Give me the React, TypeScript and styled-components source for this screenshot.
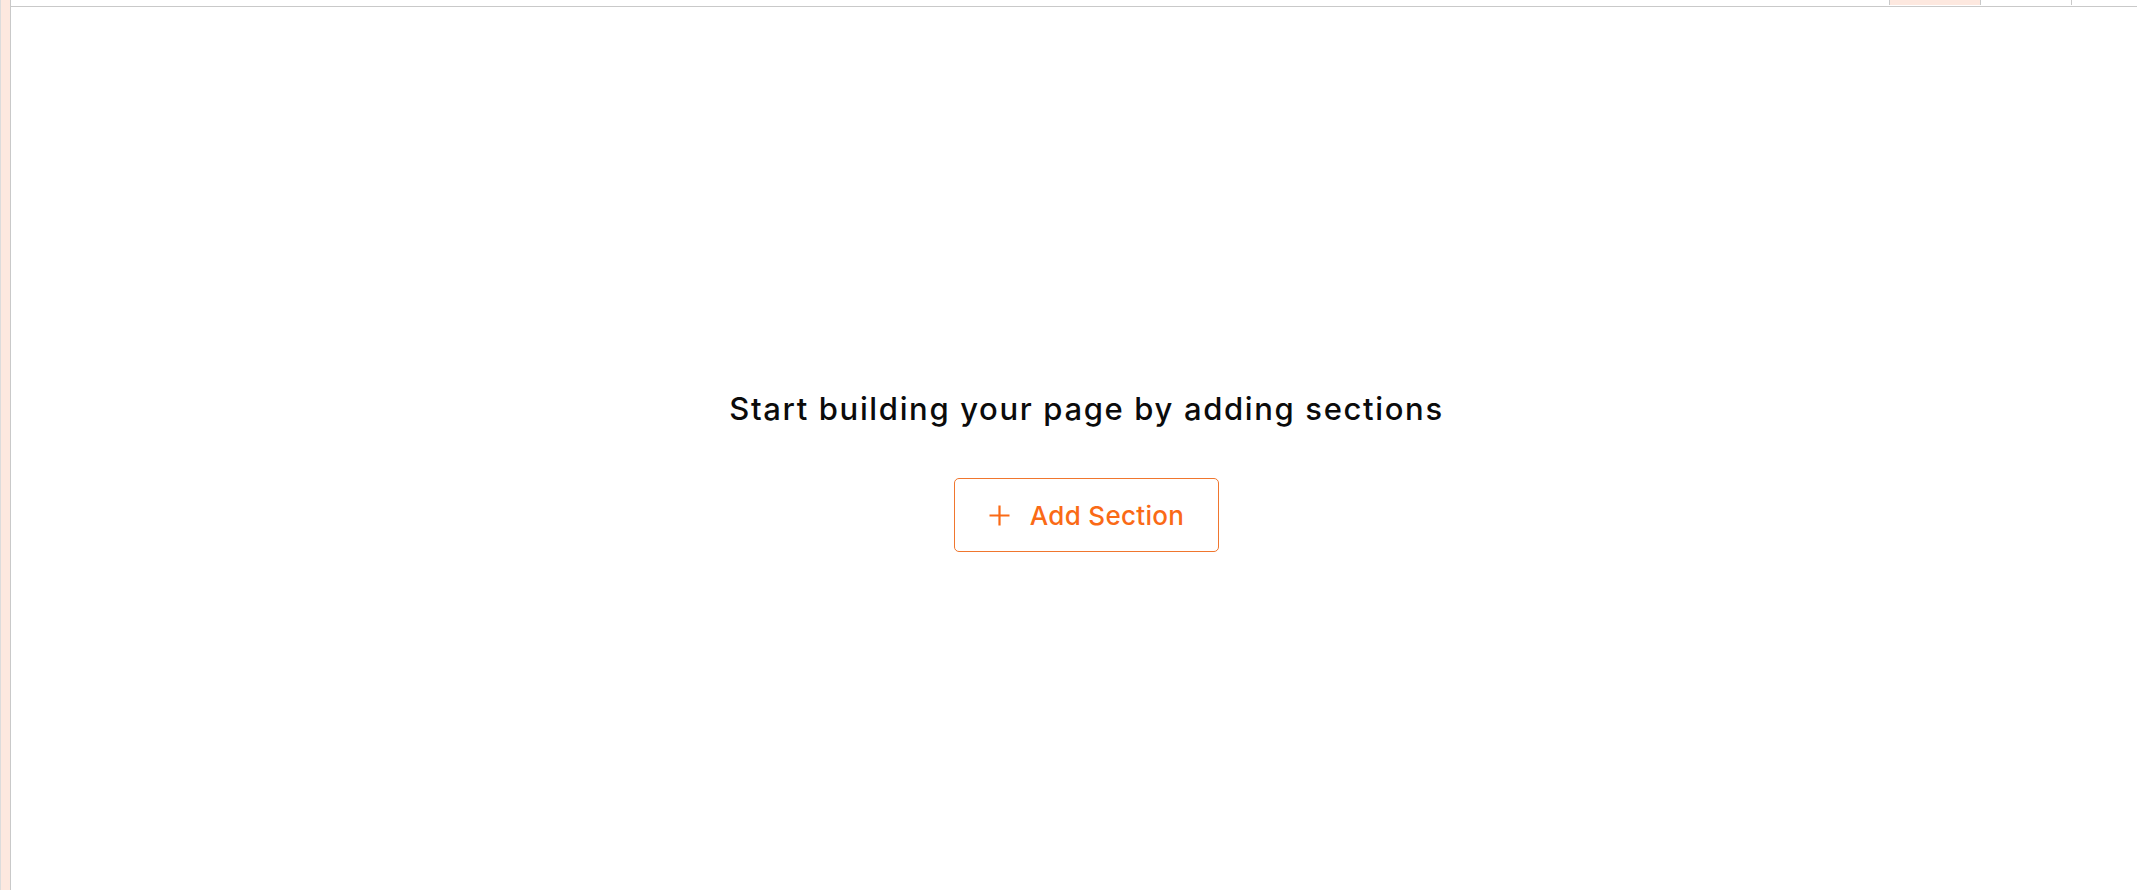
import styled, { createGlobalStyle } from 'styled-components'

const Colors = {
  Peach: '#fde8df',
  Line: '#c9c9c9',
  LineLight: '#dcdcdc',
  Orange: '#fa6a16',
  OrangeBorder: '#f0762e',
  Text: '#0b0b0b',
  White: '#ffffff',
}

const GlobalStyle = createGlobalStyle`
  html, body, #root {
    margin: 0;
    padding: 0;
    height: 100%;
  }
  body {
    background: ${Colors.White};
    font-family: Inter, 'Open Sans', sans-serif;
    overflow: hidden;
  }
`

const tabs = [{ active: true }, { active: false }, { active: false }]

const PlusIcon = () => (
  <svg width="21" height="21" viewBox="0 0 21 21" fill="none">
    <path d="M10.5 0.5v20M0.5 10.5h20" stroke={Colors.Orange} strokeWidth="2.2" />
  </svg>
)

export default function App() {
  return (
    <>
      <GlobalStyle />
      <Page>
        <SideStrip />
        <Main>
          <TopBar>
            <Tabs>
              {tabs.map((tab, i) => (
                <Tab key={i} $active={tab.active} />
              ))}
            </Tabs>
          </TopBar>
          <Canvas>
            <EmptyTitle>Start building your page by adding sections</EmptyTitle>
            <AddButton type="button">
              <PlusIcon />
              <span>Add Section</span>
            </AddButton>
          </Canvas>
        </Main>
      </Page>
    </>
  )
}

const Page = styled.div`
  display: flex;
  width: 100vw;
  height: 100vh;
`

const SideStrip = styled.div`
  flex: 0 0 11px;
  box-sizing: border-box;
  background: ${Colors.Peach};
  border-left: 1px solid ${Colors.LineLight};
  border-right: 1px solid ${Colors.Line};
`

const Main = styled.div`
  flex: 1;
  display: flex;
  flex-direction: column;
  min-width: 0;
`

const TopBar = styled.div`
  display: flex;
  justify-content: flex-end;
  height: 6px;
  border-bottom: 1px solid ${Colors.Line};
  overflow: hidden;
`

const Tabs = styled.div`
  display: flex;
  height: 5px;
  width: 248px;
`

const Tab = styled.div<{ $active: boolean }>`
  flex: 0 0 91px;
  box-sizing: border-box;
  border-left: 1px solid ${Colors.Line};
  background: ${(p) => (p.$active ? Colors.Peach : Colors.White)};
`

const Canvas = styled.div`
  flex: 1;
  display: flex;
  flex-direction: column;
  align-items: center;
  padding: 386px 0 0 25px;
`

const EmptyTitle = styled.h2`
  margin: 0;
  font-family: Inter, 'Open Sans', sans-serif;
  font-weight: 500;
  font-size: 31px;
  line-height: 31px;
  letter-spacing: 1.65px;
  color: ${Colors.Text};
`

const AddButton = styled.button`
  display: flex;
  align-items: center;
  justify-content: center;
  gap: 20px;
  box-sizing: border-box;
  width: 265px;
  height: 74px;
  margin-top: 54px;
  padding: 0;
  background: ${Colors.White};
  border: 1px solid ${Colors.OrangeBorder};
  border-radius: 5px;
  font-family: Inter, 'Open Sans', sans-serif;
  font-size: 26px;
  font-weight: 500;
  letter-spacing: 0.3px;
  color: ${Colors.Orange};
  cursor: pointer;
`
